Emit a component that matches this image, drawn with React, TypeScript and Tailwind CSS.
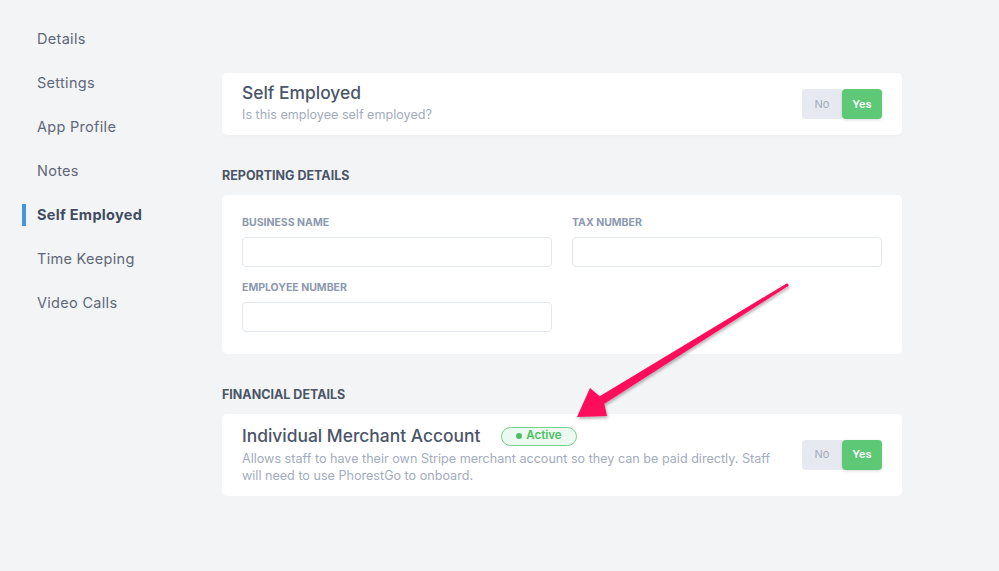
import React from 'react'

const navItems = ['Details', 'Settings', 'App Profile', 'Notes', 'Self Employed', 'Time Keeping', 'Video Calls']

function Toggle() {
  return (
    <div className="flex h-[30px] w-[80px] shrink-0 rounded-[4px] text-[11px]">
      <div className="flex w-[40px] items-center justify-center rounded-l-[4px] bg-[#e6e9ef] text-[#a3abbb]">No</div>
      <div className="flex w-[40px] items-center justify-center rounded-[4px] bg-[#5dc875] font-semibold text-white shadow-[0_1px_3px_rgba(0,0,0,0.15)]">
        Yes
      </div>
    </div>
  )
}

function Field({ label }: { label: string }) {
  return (
    <div className="flex flex-col">
      <div className="h-[14px] text-[10.5px] font-bold leading-[14px] text-[#8d98b0]">{label}</div>
      <input className="mt-[7px] h-[30px] rounded-[4px] border border-[#e3e7ee] bg-white px-3 text-sm outline-none" />
    </div>
  )
}

function Arrow() {
  return (
    <svg className="pointer-events-none absolute left-0 top-0" width="999" height="571">
      <defs>
        <filter id="sh" x="-20%" y="-20%" width="140%" height="140%">
          <feDropShadow dx="1" dy="2" stdDeviation="1.5" floodColor="#000" floodOpacity="0.3" />
        </filter>
      </defs>
      <g filter="url(#sh)" fill="#fe0b5c">
        <polygon points="787.8,286.3 604.3,403.7 607,416 577,417 590,388 599.7,396.3 786.2,283.7" />
        <circle cx="787" cy="285" r="1.6" />
      </g>
    </svg>
  )
}

export default function App() {
  return (
    <div
      className="relative flex min-h-[571px] w-full bg-[#f3f4f6] text-[#4a5568]"
      style={{ fontFamily: 'Inter, "Open Sans", sans-serif' }}
    >
      {/* sidebar */}
      <div className="flex w-[222px] shrink-0 flex-col gap-[22px] pl-[22px] pt-[28px]">
        {navItems.map(item => {
          const active = item === 'Self Employed'
          return (
            <div
              key={item}
              className={`h-[22px] border-l-4 pl-[11px] text-[14.5px] leading-[22px] tracking-[0.3px] ${
                active ? 'border-[#4297d9] font-bold text-[#3f4b5e]' : 'border-transparent text-[#5f6878]'
              }`}
            >
              {item}
            </div>
          )
        })}
      </div>

      {/* content */}
      <div className="w-[680px] pt-[73px]">
        <div className="flex h-[62px] items-center justify-between rounded-[5px] bg-white px-5 shadow-[0_1px_2px_rgba(0,0,0,0.03)]">
          <div className="-mt-[2px]">
            <div className="text-[17.4px] font-medium leading-[22px] text-[#4a5568]">Self Employed</div>
            <div className="mt-[2px] text-[12.6px] leading-[18px] text-[#a3acbe]">Is this employee self employed?</div>
          </div>
          <Toggle />
        </div>

        <div className="mt-[33px] text-[12.5px] font-bold leading-4 text-[#4a5568]">REPORTING DETAILS</div>
        <div className="mt-[11px] rounded-[5px] bg-white px-5 pb-[22px] pt-[21px]">
          <div className="grid grid-cols-2 gap-x-5 gap-y-[14px]">
            <Field label="BUSINESS NAME" />
            <Field label="TAX NUMBER" />
            <Field label="EMPLOYEE NUMBER" />
          </div>
        </div>

        <div className="mt-[33px] text-[12.5px] font-bold leading-4 text-[#4a5568]">FINANCIAL DETAILS</div>
        <div className="mt-[11px] flex items-center justify-between rounded-[5px] bg-white px-5 pb-[12px] pt-[11px]">
          <div className="max-w-[540px]">
            <div className="flex h-[22px] items-center">
              <span className="text-[17.4px] font-medium text-[#4a5568]">Individual Merchant Account</span>
              <span className="ml-[21px] flex h-[19px] items-center gap-[4px] rounded-full border border-[#72d28c] bg-[#ecf9f0] px-[14px] text-[11.5px] font-semibold text-[#4cbf65]">
                <span className="h-[6px] w-[6px] rounded-full bg-[#4cbf65]" />
                Active
              </span>
            </div>
            <div className="mt-[3px] text-[12.6px] leading-[17px] text-[#a3acbe]">
              Allows staff to have their own Stripe merchant account so they can be paid directly. Staff will need to use
              PhorestGo to onboard.
            </div>
          </div>
          <Toggle />
        </div>
      </div>

      <Arrow />
    </div>
  )
}
